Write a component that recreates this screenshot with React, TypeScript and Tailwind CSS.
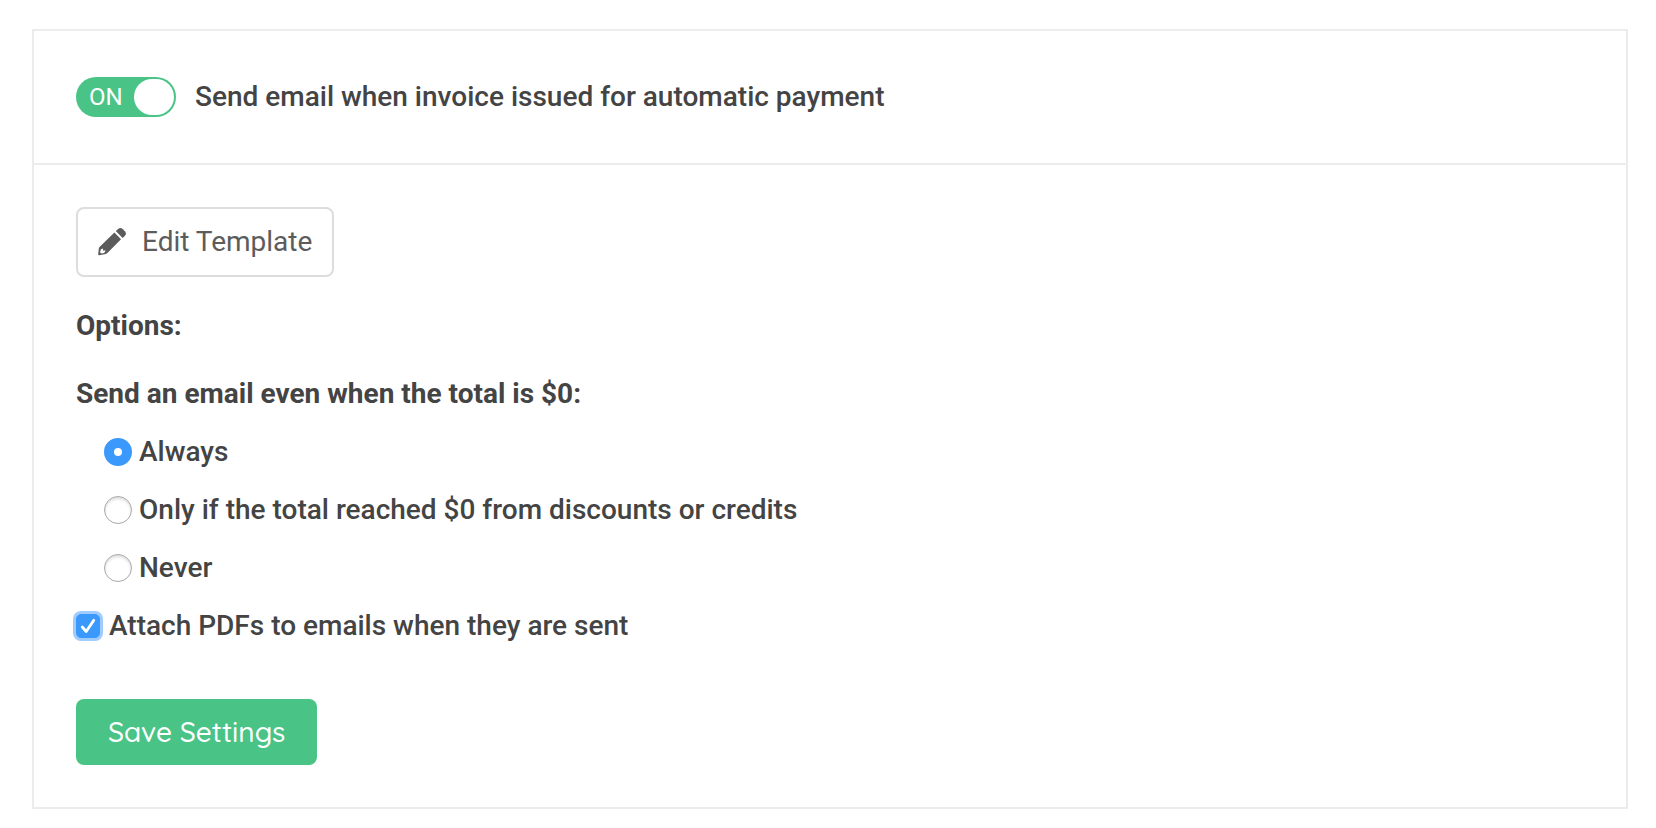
import { useState } from 'react'

const TOTAL_OPTIONS = [
  { value: 'always', label: 'Always' },
  { value: 'reached', label: 'Only if the total reached $0 from discounts or credits' },
  { value: 'never', label: 'Never' },
]

function PencilIcon() {
  return (
    <svg viewBox="0 0 28 28" className="size-7 shrink-0" fill="currentColor" aria-hidden="true">
      <path
        fillRule="evenodd"
        d="M16.4 4.6 23 11.2 9.4 25 Q8.7 25.7 7.8 25.9 L1.4 27.2 Q0 27.4 0.2 26 L0.8 20.6 Q1 19.4 1.8 18.7 Z M2.9 21.2 Q2 23.4 2.2 24.7 Q3.6 26 5.8 25 Q7.6 24.2 7.4 22.3 L5.2 22.7 L4.9 20.4 Z"
      />
      <path d="M17.8 3.1 20.1 0.9 Q22.5 -1 24.9 1.2 L26.9 3.2 Q29 5.5 27 7.7 L24.6 9.9 Z" />
    </svg>
  )
}

function Toggle({ on, onToggle }: { on: boolean; onToggle: () => void }) {
  return (
    <button
      type="button"
      role="switch"
      aria-checked={on}
      aria-labelledby="invoice-email-label"
      onClick={onToggle}
      className={`flex h-10 w-25 shrink-0 items-center justify-between rounded-full p-0.5 ${
        on ? 'bg-[#49c486]' : 'flex-row-reverse bg-gray-400'
      }`}
    >
      <span className="px-[11px] text-2xl font-normal text-white">{on ? 'ON' : 'OFF'}</span>
      <span className="h-9 w-10 shrink-0 rounded-full bg-white" />
    </button>
  )
}

export default function App() {
  const [enabled, setEnabled] = useState(true)
  const [total, setTotal] = useState('always')
  const [attach, setAttach] = useState(true)

  return (
    <main className="bg-white px-7 pt-[29px] pb-5 pl-8 font-['Roboto',sans-serif] text-[28px] leading-10 font-medium text-[#444]">
      <section className="border-2 border-[#ececec]">
        <header className="flex items-center gap-[19px] border-b-2 border-[#ececec] px-10.5 py-[46px]">
          <Toggle on={enabled} onToggle={() => setEnabled(!enabled)} />
          <h1 id="invoice-email-label">Send email when invoice issued for automatic payment</h1>
        </header>

        <form className="px-10.5 py-10.5" onSubmit={e => e.preventDefault()}>
          <button
            type="button"
            className="flex items-center gap-4 rounded-lg border-2 border-[#ddd] px-5 py-[13px] font-normal text-[#5c5c5c]"
          >
            <PencilIcon />
            Edit Template
          </button>

          <h2 className="mt-[29px] font-bold">Options:</h2>

          <fieldset>
            <legend className="pt-7 pb-[9px] font-bold">Send an email even when the total is $0:</legend>
            {TOTAL_OPTIONS.map(option => (
              <label key={option.value} className="flex items-center gap-[7px] py-[9px] pl-7">
                <input
                  type="radio"
                  name="total"
                  value={option.value}
                  checked={total === option.value}
                  onChange={() => setTotal(option.value)}
                  className="size-7 shrink-0 appearance-none rounded-full border border-[#a8a8a8] bg-white shadow-[inset_0_2px_3px_#ddd] checked:border-10 checked:border-[#3b99fc] checked:shadow-none"
                />
                {option.label}
              </label>
            ))}
          </fieldset>

          <label className="flex items-center gap-[9px] py-[9px]">
            <span className="grid size-6 shrink-0 place-items-center">
              <input
                type="checkbox"
                checked={attach}
                onChange={() => setAttach(!attach)}
                className="col-start-1 row-start-1 size-6 appearance-none rounded-[5px] border border-[#a8a8a8] bg-white ring-3 ring-[#a0cbfd] checked:border-[#3b99fc] checked:bg-[#3b99fc]"
              />
              {attach && (
                <svg viewBox="0 0 24 24" className="pointer-events-none col-start-1 row-start-1 size-6" aria-hidden="true">
                  <path
                    d="M6.3 13 10.2 17.5 17.8 6.3"
                    fill="none"
                    stroke="white"
                    strokeWidth="2.8"
                    strokeLinecap="round"
                    strokeLinejoin="round"
                  />
                </svg>
              )}
            </span>
            Attach PDFs to emails when they are sent
          </label>

          <button
            type="submit"
            className="mt-11 rounded-lg bg-[#49c486] px-8 py-[13px] font-['Quicksand','Lato',sans-serif] font-medium text-white"
          >
            Save Settings
          </button>
        </form>
      </section>
    </main>
  )
}
